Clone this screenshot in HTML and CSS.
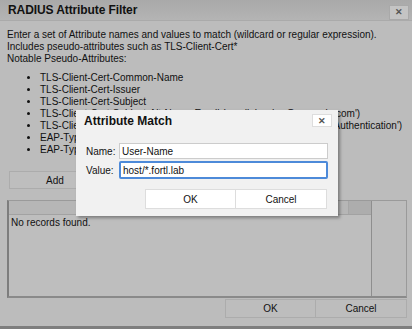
FILE: index.html
```html
<!DOCTYPE html>
<html lang="en">
<head>
  <meta charset="UTF-8" />
  <title>RADIUS Attribute Filter</title>
  <link rel="stylesheet" href="styles.css">
</head>
<body>
  <div class="dialog">
    <div class="titlebar">
      <span class="title">RADIUS Attribute Filter</span>
      <button class="close">&#x2715;</button>
    </div>
    <div class="content">
      <p class="intro">
        Enter a set of Attribute names and values to match (wildcard or regular expression).<br>
        Includes pseudo-attributes such as TLS-Client-Cert*<br>
        Notable Pseudo-Attributes:
      </p>
      <ul class="pseudo">
        <li>TLS-Client-Cert-Common-Name</li>
        <li>TLS-Client-Cert-Issuer</li>
        <li>TLS-Client-Cert-Subject</li>
        <li>TLS-Client-Cert-Subject-Alt-Name-Email (e.g. 'john.doe@example.com')</li>
        <li>TLS-Client-Cert-Extended-Key-Usage-OIDs (e.g. 'TLS Web Client Authentication')</li>
        <li>EAP-Type</li>
        <li>EAP-Type-Name</li>
      </ul>
      <button class="add">Add</button>
      <div class="grid">
        <div class="grid-main">
          <div class="grid-head">
            <span class="head-col"></span>
          </div>
          <div class="grid-body">No records found.</div>
        </div>
        <div class="grid-side"></div>
      </div>
    </div>
    <div class="footer">
      <button class="btn">OK</button>
      <button class="btn">Cancel</button>
    </div>
  </div>

  <div class="modal">
    <div class="modal-titlebar">
      <span class="modal-title">Attribute Match</span>
      <button class="modal-close">&#x2715;</button>
    </div>
    <div class="modal-body">
      <div class="field">
        <label>Name:</label>
        <input type="text" value="User-Name">
      </div>
      <div class="field">
        <label>Value:</label>
        <input type="text" class="focused" value="host/*.fortl.lab">
      </div>
      <div class="modal-buttons">
        <button class="modal-btn">OK</button>
        <button class="modal-btn">Cancel</button>
      </div>
    </div>
  </div>
</body>
</html>
```

FILE: styles.css
```css
* {
  box-sizing: border-box;
}

body {
  margin: 0;
  width: 412px;
  height: 329px;
  overflow: hidden;
  background: #7e7e7e;
  font-family: 'Liberation Sans', Arial, sans-serif;
  color: #111;
  position: relative;
}

button {
  font-family: inherit;
  color: #111;
  cursor: pointer;
}

.dialog {
  width: 412px;
  height: 326px;
  background: #bcbcbc;
  display: flex;
  flex-direction: column;
}

.titlebar {
  height: 21px;
  padding: 0 3px 0 8px;
  display: flex;
  align-items: center;
  justify-content: space-between;
  background: linear-gradient(#a9a9a9, #b4b4b4);
  border-bottom: 1px solid #aaa;
}

.title {
  font-size: 12px;
  font-weight: bold;
  letter-spacing: -0.1px;
}

.close {
  width: 20px;
  height: 15px;
  padding: 0;
  font-size: 9px;
  font-weight: bold;
  color: #555;
  background: #c4c4c4;
  border: 1px solid #a9a9a9;
  margin-top: 4px;
}

.content {
  flex: 1;
  padding: 8px 5px 0 7px;
  display: flex;
  flex-direction: column;
}

.intro {
  margin: 0;
  font-size: 10px;
  line-height: 12px;
  white-space: nowrap;
}

.pseudo {
  margin: 7px 0 0;
  padding-left: 33px;
  font-size: 10px;
  line-height: 12px;
  white-space: nowrap;
}

.add {
  margin: 15px 0 0 2px;
  width: 92px;
  height: 18px;
  padding: 0;
  font-size: 10px;
  background: #bebebe;
  border: 1px solid #acacac;
}

.grid {
  margin-top: 11px;
  height: 98px;
  display: flex;
  border: 1px solid #9a9a9a;
  border-left: 2px solid #7d7d7d;
  border-bottom: 2px solid #8a8a8a;
}

.grid-main {
  flex: 1;
  display: flex;
  flex-direction: column;
  border-right: 1px solid #8e8e8e;
}

.grid-head {
  height: 14px;
  background: #b6b6b6;
  border-bottom: 1px solid #a2a2a2;
  display: flex;
  justify-content: flex-end;
}

.head-col {
  width: 23px;
  background: #adadad;
  border-left: 1px solid #a6a6a6;
}

.grid-body {
  flex: 1;
  padding: 2px 2px;
  font-size: 10px;
  background: #bebebe;
}

.grid-side {
  width: 34px;
  background: #bcbcbc;
}

.footer {
  display: flex;
  justify-content: flex-end;
  padding: 0 5px 8px 0;
}

.btn {
  width: 91px;
  height: 19px;
  padding: 0;
  font-size: 10px;
  background: #bdbdbd;
  border: 1px solid #acacac;
}

.btn + .btn {
  border-left: none;
}

.modal {
  position: absolute;
  left: 76px;
  top: 110px;
  width: 262px;
  height: 106px;
  background: #f1f1f1;
  box-shadow: 2px 2px 3px rgba(0, 0, 0, 0.35);
}

.modal-titlebar {
  height: 21px;
  padding: 0 6px 0 8px;
  display: flex;
  align-items: center;
  justify-content: space-between;
}

.modal-title {
  font-size: 12px;
  font-weight: bold;
}

.modal-close {
  width: 20px;
  height: 13px;
  padding: 0;
  font-size: 9px;
  font-weight: bold;
  color: #555;
  background: #fff;
  border: 1px solid #ddd;
}

.modal-body {
  padding: 11px 10px 0 10px;
}

.field {
  display: flex;
  align-items: center;
  height: 18px;
  margin-bottom: 1px;
}

.field label {
  width: 33px;
  font-size: 10px;
}

.field input {
  width: 209px;
  height: 16px;
  padding: 0 2px;
  font-family: inherit;
  font-size: 10px;
  color: #111;
  background: #fff;
  border: 1px solid #ccc;
  outline: none;
}

.field input.focused {
  height: 18px;
  border: 2px solid #4d8ad9;
  border-radius: 2px;
}

.modal-buttons {
  display: flex;
  justify-content: flex-end;
  margin-top: 10px;
  padding-right: 1px;
}

.modal-btn {
  width: 91px;
  height: 20px;
  padding: 0;
  font-size: 10px;
  background: #fff;
  border: 1px solid #ddd;
}

.modal-btn + .modal-btn {
  border-left: none;
}
```
